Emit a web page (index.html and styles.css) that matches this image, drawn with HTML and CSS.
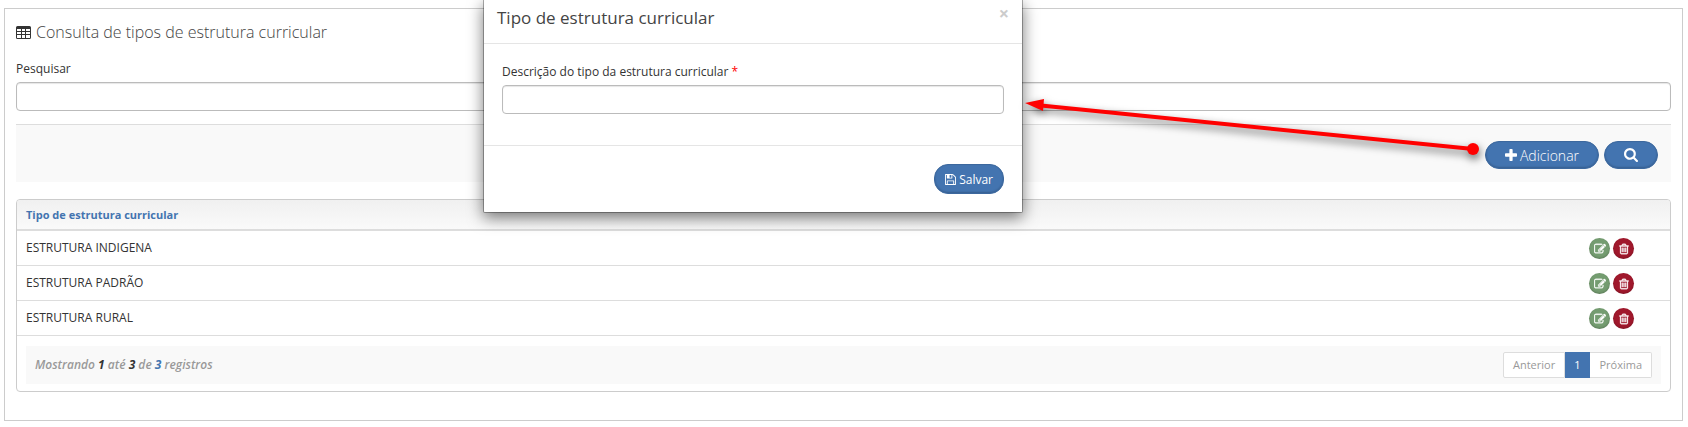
FILE: index.html
```html
<!DOCTYPE html>
<html lang="pt-BR">
<head>
	<meta charset="UTF-8">
	<title>Tipo de estrutura curricular</title>
	<link rel="stylesheet" href="styles.css">
</head>
<body>
	<svg class="sprite" aria-hidden="true">
		<symbol id="i-table" viewBox="0 0 15 13">
			<path fill-rule="evenodd" d="M1.500 0h12a1.500 1.500 0 0 1 1.500 1.500v10a1.500 1.500 0 0 1-1.500 1.500h-12a1.500 1.500 0 0 1-1.500-1.500v-10a1.500 1.500 0 0 1 1.500-1.500zM1 3v2h4v-2zM6 3v2h3v-2zM10 3v2h4v-2zM1 6v2h4v-2zM6 6v2h3v-2zM10 6v2h4v-2zM1 9v3h4v-3zM6 9v3h3v-3zM10 9v3h4v-3z"/>
		</symbol>
		<symbol id="i-plus" viewBox="192 128 1408 1408">
			<path d="M1600 736v192q0 40-28 68t-68 28h-416v416q0 40-28 68t-68 28h-192q-40 0-68-28t-28-68v-416h-416q-40 0-68-28t-28-68v-192q0-40 28-68t68-28h416v-416q0-40 28-68t68-28h192q40 0 68 28t28 68v416h416q40 0 68 28t28 68z"/>
		</symbol>
		<symbol id="i-search" viewBox="64 128 1664 1664">
			<path d="M1216 832q0-185-131.500-316.500t-316.500-131.500-316.500 131.500-131.500 316.500 131.500 316.500 316.500 131.500 316.500-131.500 131.500-316.500zm512 832q0 52-38 90t-90 38q-54 0-90-38l-343-342q-179 124-399 124-143 0-273.500-55.500t-225-150-150-225-55.500-273.500 55.500-273.500 150-225 225-150 273.500-55.500 273.500 55.500 225 150 150 225 55.500 273.500q0 220-124 399l343 343q37 37 37 90z"/>
		</symbol>
		<symbol id="i-edit" viewBox="0 0 1792 1792">
			<path d="M888 1184l116-116-152-152-116 116v56h96v96h56zm440-720q-16-16-33 1l-350 350q-17 17-1 33t33-1l350-350q17-17 1-33zm80 594v190q0 119-84.500 203.500t-203.500 84.500h-832q-119 0-203.500-84.500t-84.500-203.500v-832q0-119 84.500-203.500t203.500-84.500h832q63 0 117 25 15 7 18 23 3 17-9 29l-49 49q-14 14-32 8-23-6-45-6h-832q-66 0-113 47t-47 113v832q0 66 47 113t113 47h832q66 0 113-47t47-113v-126q0-13 9-22l64-64q15-15 35-7t20 29zm-96-738l288 288-672 672h-288v-288zm444 132l-92 92-288-288 92-92q28-28 68-28t68 28l152 152q28 28 28 68t-28 68z"/>
		</symbol>
		<symbol id="i-trash" viewBox="0 0 1792 1792">
			<path d="M704 736v576q0 14-9 23t-23 9h-64q-14 0-23-9t-9-23v-576q0-14 9-23t23-9h64q14 0 23 9t9 23zm256 0v576q0 14-9 23t-23 9h-64q-14 0-23-9t-9-23v-576q0-14 9-23t23-9h64q14 0 23 9t9 23zm256 0v576q0 14-9 23t-23 9h-64q-14 0-23-9t-9-23v-576q0-14 9-23t23-9h64q14 0 23 9t9 23zm128 724v-948h-896v948q0 22 7 40.500t14.500 27 10.500 8.500h832q3 0 10.500-8.500t14.500-27 7-40.500zm-672-1076h448l-48-117q-7-9-17-11h-317q-10 2-17 11zm928 32v64q0 14-9 23t-23 9h-96v948q0 83-47 143.500t-113 60.500h-832q-66 0-113-58.500t-47-141.500v-952h-96q-14 0-23-9t-9-23v-64q0-14 9-23t23-9h309l70-167q15-37 54-63t79-26h320q40 0 79 26t54 63l70 167h309q14 0 23 9t9 23z"/>
		</symbol>
		<symbol id="i-save" viewBox="128 128 1536 1536">
			<path d="M512 1536h768v-384h-768v384zm896 0h128v-896q0-14-10-38.500t-20-34.500l-281-281q-10-10-34-20t-39-10v416q0 40-28 68t-68 28h-576q-40 0-68-28t-28-68v-416h-128v1280h128v-416q0-40 28-68t68-28h832q40 0 68 28t28 68v416zm-384-928v-320q0-13-9.500-22.500t-22.500-9.500h-192q-13 0-22.500 9.500t-9.500 22.500v320q0 13 9.500 22.500t22.500 9.500h192q13 0 22.500-9.500t9.500-22.500zm640 32v928q0 40-28 68t-68 28h-1344q-40 0-68-28t-28-68v-1344q0-40 28-68t68-28h928q40 0 88 20t76 48l280 280q28 28 48 76t20 88z"/>
		</symbol>
	</svg>

	<main class="panel">
		<h1 class="title"><svg class="icon-table"><use href="#i-table"/></svg>Consulta de tipos de estrutura curricular</h1>
		<label class="label" for="pesquisar">Pesquisar</label>
		<input class="field" type="text" id="pesquisar">
		<div class="toolbar">
			<button type="button" class="btn"><svg class="icon"><use href="#i-plus"/></svg>Adicionar</button>
			<button type="button" class="btn" aria-label="Pesquisar"><svg class="icon icon-search"><use href="#i-search"/></svg></button>
		</div>

		<div class="grid">
			<table>
				<thead>
					<tr><th>Tipo de estrutura curricular</th><th></th></tr>
				</thead>
				<tbody>
					<tr>
						<td>ESTRUTURA INDIGENA</td>
						<td class="actions">
							<div>
								<button type="button" class="round edit" aria-label="Editar"><svg><use href="#i-edit"/></svg></button>
								<button type="button" class="round trash" aria-label="Excluir"><svg><use href="#i-trash"/></svg></button>
							</div>
						</td>
					</tr>
					<tr>
						<td>ESTRUTURA PADRÃO</td>
						<td class="actions">
							<div>
								<button type="button" class="round edit" aria-label="Editar"><svg><use href="#i-edit"/></svg></button>
								<button type="button" class="round trash" aria-label="Excluir"><svg><use href="#i-trash"/></svg></button>
							</div>
						</td>
					</tr>
					<tr>
						<td>ESTRUTURA RURAL</td>
						<td class="actions">
							<div>
								<button type="button" class="round edit" aria-label="Editar"><svg><use href="#i-edit"/></svg></button>
								<button type="button" class="round trash" aria-label="Excluir"><svg><use href="#i-trash"/></svg></button>
							</div>
						</td>
					</tr>
				</tbody>
			</table>
			<div class="grid-footer">
				<p class="info">Mostrando <b>1</b> até <b>3</b> de <b class="total">3</b> registros</p>
				<nav class="pages">
					<a href="#">Anterior</a>
					<a href="#" class="on">1</a>
					<a href="#">Próxima</a>
				</nav>
			</div>
		</div>
	</main>

	<div class="modal" role="dialog" aria-labelledby="modal-title">
		<div class="modal-header">
			<h2 id="modal-title">Tipo de estrutura curricular</h2>
			<button type="button" class="close" aria-label="Fechar">×</button>
		</div>
		<div class="modal-body">
			<label class="label" for="descricao">Descrição do tipo da estrutura curricular <span class="required">*</span></label>
			<input class="field" type="text" id="descricao">
		</div>
		<div class="modal-footer">
			<button type="button" class="btn btn-save"><svg><use href="#i-save"/></svg>Salvar</button>
		</div>
	</div>

	<!-- seta do botão Adicionar até o modal -->
	<svg class="arrow" viewBox="0 0 460 60" width="460" height="60" aria-hidden="true">
		<line x1="16" y1="15" x2="453" y2="59"/>
		<path d="M5 13L24 9L23 21Z"/>
		<circle cx="453" cy="59" r="6"/>
	</svg>
</body>
</html>
```
FILE: styles.css
```css
* {
    box-sizing: border-box;
}
body {
    position: relative;
    margin: 0;
    padding: 8px 5px 6px 4px;
    background: #fff;
    color: #333;
    font: 12px/18px "Open Sans", "Noto Sans", sans-serif;
}
h1, h2, p {
    margin: 0;
}
button, input {
    font-family: inherit;
}
button {
    cursor: pointer;
}
svg {
    fill: currentColor;
}
.sprite {
    display: none;
}
.panel {
    padding: 11px 11px 28px;
    border: 1px solid #ccc;
}
.title {
    display: flex;
    align-items: center;
    gap: 5px;
    height: 24px;
    color: #444;
    font-size: 16px;
    font-weight: 300;
}
.icon-table {
    width: 15px;
    height: 13px;
    color: #333;
}
.label {
    display: block;
    margin: 16px 0 4px;
}
.field {
    display: block;
    width: 100%;
    height: 29px;
    padding: 4px 8px;
    border: 1px solid #bbb;
    border-radius: 4px;
    background: #fff;
    box-shadow: inset 0 1px 1px rgba(0,0,0,0.1);
    font-size: 13px;
}
.toolbar {
    display: flex;
    justify-content: flex-end;
    gap: 5px;
    margin: 13px 0 17px;
    padding: 16px 13px 13px;
    border-top: 1px solid #ddd;
    background: #f9f9f9;
}
.btn {
    display: flex;
    align-items: center;
    gap: 3px;
    height: 28px;
    padding: 0 19px;
    border: 1px solid #3c689e;
    border-radius: 14px;
    background: #4374b0;
    box-shadow: inset 0 -1px 2px rgba(0,0,0,0.2);
    color: #fff;
    font-size: 14px;
    font-weight: 300;
}
.icon {
    width: 12px;
    height: 12px;
}
.icon-search {
    width: 14px;
    height: 14px;
}

/* tabela */
.grid {
    border: 1px solid #ccc;
    border-radius: 4px;
    overflow: hidden;
}
table {
    width: 100%;
    border-collapse: collapse;
}
th {
    height: 30px;
    padding: 0 9px;
    border-bottom: 2px solid #ddd;
    background: linear-gradient(#f0f0f0, #fafafa);
    color: #4374b0;
    font-size: 11px;
    text-align: left;
}
td {
    height: 35px;
    padding: 0 9px;
    border-bottom: 1px solid #ddd;
}
.actions {
    width: 90px;
}
.actions div {
    display: flex;
    gap: 3px;
    padding-top: 2px;
}
.round {
    display: flex;
    align-items: center;
    justify-content: center;
    width: 21px;
    height: 21px;
    padding: 0;
    border: 0;
    border-radius: 50%;
    box-shadow: inset 0 -1px 2px rgba(0,0,0,0.2);
    color: #fff;
}
.round svg {
    width: 12px;
    height: 12px;
    stroke: currentColor;
    stroke-width: 50;
}
.edit {
    background: #749c70;
}
.trash {
    background: #a0182c;
}
.grid-footer {
    display: flex;
    align-items: center;
    justify-content: space-between;
    margin: 10px 9px 7px;
    padding: 6px 9px;
    background: #f9f9f9;
}
.info {
    color: #999;
    font-style: italic;
    font-weight: 600;
}
.info b {
    color: #333;
    font-weight: bold;
}
.info .total {
    color: #4374b0;
}
.pages {
    display: flex;
}
.pages a {
    padding: 3px 9px;
    border: 1px solid #ddd;
    border-left: 0;
    background: #fff;
    color: #999;
    font-size: 11px;
    text-decoration: none;
}
.pages a:first-child {
    border-left: 1px solid #ddd;
    border-radius: 2px 0 0 2px;
}
.pages a:last-child {
    border-radius: 0 2px 2px 0;
}
.pages a.on {
    border-color: #4374b0;
    background: #4374b0;
    color: #fff;
}

/* modal */
.modal {
    position: absolute;
    top: 0;
    left: 483px;
    width: 540px;
    border: 1px solid rgba(0,0,0,0.3);
    border-top: 0;
    border-radius: 0 0 2px 2px;
    background: #fff;
    background-clip: padding-box;
    box-shadow: 0 5px 15px rgba(0,0,0,0.5);
}
.modal-header {
    display: flex;
    align-items: flex-start;
    justify-content: space-between;
    height: 44px;
    padding: 4px 13px 0;
    border-bottom: 1px solid #e5e5e5;
}
.modal-header h2 {
    color: #444;
    font-size: 17px;
    font-weight: normal;
    line-height: 28px;
}
.close {
    padding: 0;
    border: 0;
    background: none;
    color: #ccc;
    font-size: 18px;
    font-weight: bold;
    line-height: 18px;
}
.modal-body {
    padding: 3px 18px 31px;
}
.required {
    color: #f00;
}
.modal-footer {
    display: flex;
    justify-content: flex-end;
    padding: 18px;
    border-top: 1px solid #e5e5e5;
}
.btn-save {
    height: 30px;
    padding: 0 10px;
    border-radius: 14px;
    font-size: 12px;
    font-weight: normal;
}
.btn-save svg {
    width: 11px;
    height: 11px;
}
.arrow {
    position: absolute;
    top: 90px;
    left: 1020px;
    overflow: visible;
    fill: #f00;
    stroke: #f00;
    pointer-events: none;
    filter: drop-shadow(1px 4px 4px rgba(0,0,0,0.6));
}
.arrow line {
    stroke-width: 4;
}
.arrow path, .arrow circle {
    stroke: none;
}
```
